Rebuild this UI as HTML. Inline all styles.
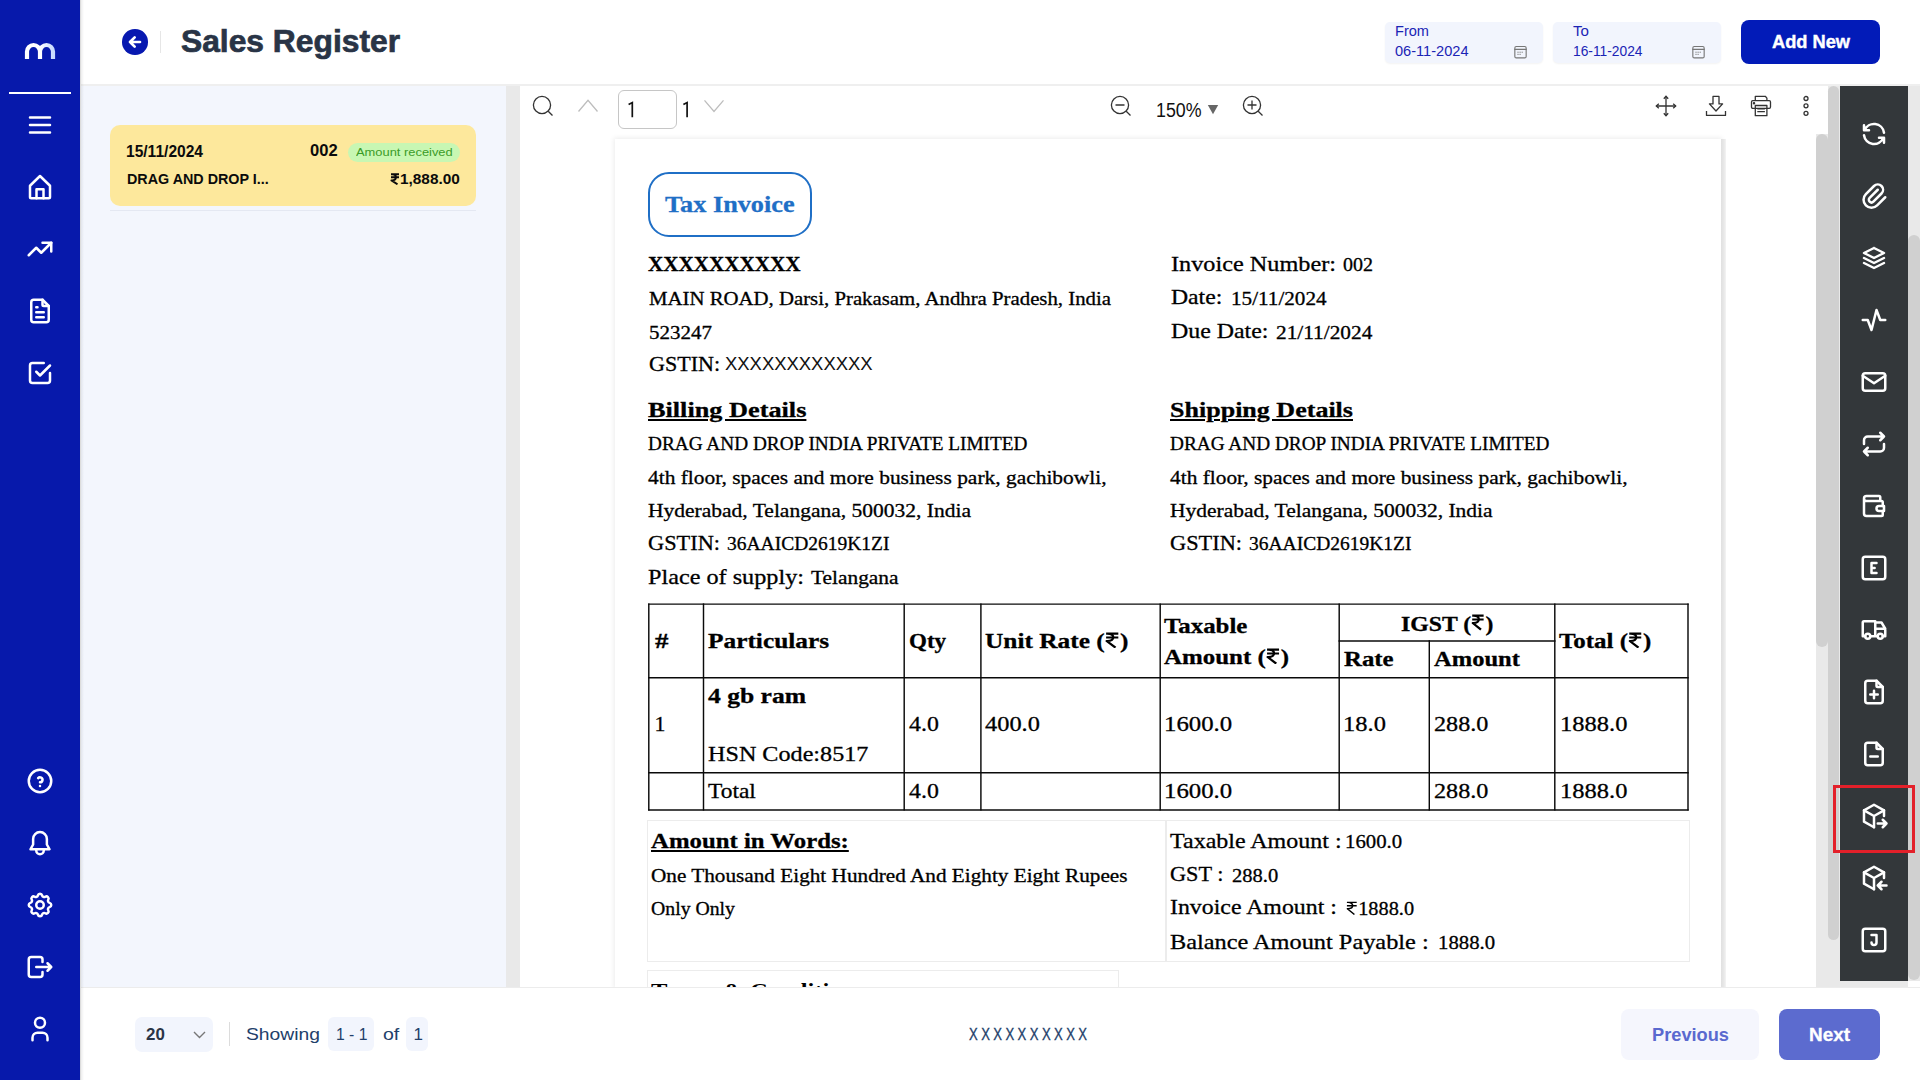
<!DOCTYPE html><html><head><meta charset="utf-8"><style>
html,body{margin:0;padding:0;width:1920px;height:1080px;overflow:hidden;background:#fff;}
body{position:relative;font-family:"Liberation Sans", sans-serif;}
.t{position:absolute;white-space:pre;line-height:normal;}
svg{display:block}
</style></head><body>
<div style="position:absolute;left:0px;top:0px;width:1920px;height:84px;background:#ffffff;"></div>
<div style="position:absolute;left:0px;top:84px;width:1920px;height:2px;background:#efefef;"></div>
<div style="position:absolute;left:80px;top:86px;width:426px;height:902px;background:#f3f6fd;"></div>
<div style="position:absolute;left:506px;top:86px;width:14px;height:902px;background:#e9e9e9;"></div>
<div style="position:absolute;left:520px;top:86px;width:1296px;height:902px;background:#ffffff;"></div>
<div style="position:absolute;left:615px;top:139px;width:1106px;height:849px;background:#ffffff;box-shadow:0 0 5px 1px rgba(0,0,0,0.08);"></div>
<div style="position:absolute;left:1721px;top:139px;width:5px;height:849px;background:linear-gradient(90deg,#e0e0e0,#e8e8e8 60%,#f4f4f4);"></div>
<div style="position:absolute;left:1816px;top:134px;width:24px;height:854px;background:#e9e9e9;"></div>
<div style="position:absolute;left:1828px;top:86px;width:12px;height:48px;background:#e9e9e9;"></div>
<div style="position:absolute;left:1816px;top:134px;width:12px;height:513px;background:#d0d0d0;border-radius:6px;"></div>
<div style="position:absolute;left:1828px;top:86px;width:11px;height:854px;background:#d0d0d0;border-radius:6px;"></div>
<div style="position:absolute;left:1840px;top:86px;width:68px;height:902px;background:#e9e9e9;"></div>
<div style="position:absolute;left:1840px;top:86px;width:68px;height:895px;background:#33373a;"></div>
<div style="position:absolute;left:1908px;top:86px;width:12px;height:895px;background:#e9e9e9;"></div>
<div style="position:absolute;left:1908px;top:235px;width:12px;height:745px;background:#d0d0d0;border-radius:6px;"></div>
<div style="position:absolute;left:80px;top:988px;width:1840px;height:92px;background:#ffffff;"></div>
<div style="position:absolute;left:80px;top:987px;width:1840px;height:1px;background:#ececec;"></div>
<div style="position:absolute;left:0px;top:0px;width:80px;height:1080px;background:#0719ab;"></div>
<div style="position:absolute;left:80px;top:0px;width:1px;height:1080px;background:#dcdcdc;"></div>
<div style="position:absolute;left:81px;top:0px;width:3px;height:1080px;background:linear-gradient(90deg,rgba(0,0,0,0.07),rgba(0,0,0,0));"></div>
<div style="position:absolute;left:9px;top:92px;width:62px;height:2px;background:#ffffff;"></div>
<div style="position:absolute;left:122.3px;top:29.2px;width:25.5px;height:25.5px;background:#0718b0;border-radius:50%;"></div>
<svg style="position:absolute;left:127px;top:34px;" width="16" height="16" viewBox="0 0 24 24" fill="none" stroke-linecap="round" stroke-linejoin="round"><path d="M4.5 12h15M4.5 12l7 7M4.5 12l7-7" stroke="#fff" stroke-width="4"/></svg>
<div style="position:absolute;left:160px;top:31px;width:1px;height:22px;background:#e6e6e6;"></div>
<div class="t" style="left:181px;top:24.45px;font-size:31px;font-weight:700;color:#293446;font-family:'Liberation Sans', sans-serif;transform:scaleX(1.0249);transform-origin:0 0;-webkit-text-stroke:0.7px #293446;">Sales Register</div>
<div style="position:absolute;left:1385px;top:22px;width:158px;height:41px;background:#f2f5fd;border-radius:5px;box-shadow:0 1px 2px rgba(0,0,0,0.05);"></div>
<div style="position:absolute;left:1553px;top:22px;width:168px;height:41px;background:#f2f5fd;border-radius:5px;box-shadow:0 1px 2px rgba(0,0,0,0.05);"></div>
<div class="t" style="left:1395px;top:23.33px;font-size:14px;font-weight:400;color:#1b24b5;font-family:'Liberation Sans', sans-serif;transform:scaleX(1.0407);transform-origin:0 0;">From</div>
<div class="t" style="left:1395px;top:43.33px;font-size:14px;font-weight:400;color:#1b24b5;font-family:'Liberation Sans', sans-serif;transform:scaleX(1.0414);transform-origin:0 0;">06-11-2024</div>
<div class="t" style="left:1573px;top:23.33px;font-size:14px;font-weight:400;color:#1b24b5;font-family:'Liberation Sans', sans-serif;transform:scaleX(1.0813);transform-origin:0 0;">To</div>
<div class="t" style="left:1573px;top:43.33px;font-size:14px;font-weight:400;color:#1b24b5;font-family:'Liberation Sans', sans-serif;transform:scaleX(0.9847);transform-origin:0 0;">16-11-2024</div>
<svg style="position:absolute;left:1512px;top:43px;" width="17" height="17" viewBox="0 0 24 24" fill="none" stroke-linecap="round" stroke-linejoin="round"><rect x="4" y="5" width="16" height="16" rx="2" stroke="#777" stroke-width="1.6"/><path d="M4 9h16" stroke="#777" stroke-width="1.6"/><path d="M8 13h1M11 13h1M14 13h1M8 16h1M11 16h1" stroke="#888" stroke-width="1.3"/></svg>
<svg style="position:absolute;left:1690px;top:43px;" width="17" height="17" viewBox="0 0 24 24" fill="none" stroke-linecap="round" stroke-linejoin="round"><rect x="4" y="5" width="16" height="16" rx="2" stroke="#777" stroke-width="1.6"/><path d="M4 9h16" stroke="#777" stroke-width="1.6"/><path d="M8 13h1M11 13h1M14 13h1M8 16h1M11 16h1" stroke="#888" stroke-width="1.3"/></svg>
<div style="position:absolute;left:1741px;top:20px;width:139px;height:44px;background:#021bb8;border-radius:8px;"></div>
<div class="t" style="left:1772px;top:31.71px;font-size:18px;font-weight:700;color:#ffffff;font-family:'Liberation Sans', sans-serif;transform:scaleX(1.0128);transform-origin:0 0;-webkit-text-stroke:0.4px #fff;">Add New</div>
<svg style="position:absolute;left:24px;top:42px" width="32" height="18" viewBox="0 0 32 18"><defs><linearGradient id="lg" x1="0" x2="1"><stop offset="0" stop-color="#fff"/><stop offset="1" stop-color="#c9dcff"/></linearGradient></defs><path d="M3 17V9.5a6.5 6.5 0 0 1 13 0V17" fill="none" stroke="#fff" stroke-width="4.2"/><path d="M16 9.5a6.5 6.5 0 0 1 13 0V17" fill="none" stroke="url(#lg)" stroke-width="4.2"/></svg>
<svg style="position:absolute;left:25.0px;top:110.0px;" width="30" height="30" viewBox="0 0 24 24" fill="none" stroke-linecap="round" stroke-linejoin="round"><path d="M4 6h16M4 12h16M4 18h16" stroke="#fff" stroke-width="2"/></svg>
<svg style="position:absolute;left:25.0px;top:172.0px;" width="30" height="30" viewBox="0 0 24 24" fill="none" stroke-linecap="round" stroke-linejoin="round"><path d="M4 20V11L12 3.2L20 11V20a1 1 0 0 1-1 1H5a1 1 0 0 1-1-1z" stroke="#fff" stroke-width="2"/><path d="M9.2 21v-7.2h5.6V21" stroke="#fff" stroke-width="2"/></svg>
<svg style="position:absolute;left:25.0px;top:234.0px;" width="30" height="30" viewBox="0 0 24 24" fill="none" stroke-linecap="round" stroke-linejoin="round"><path d="M3 17l6-6l4 4l8-8" stroke="#fff" stroke-width="2"/><path d="M14 7h7v7" stroke="#fff" stroke-width="2"/></svg>
<svg style="position:absolute;left:25.0px;top:296.0px;" width="30" height="30" viewBox="0 0 24 24" fill="none" stroke-linecap="round" stroke-linejoin="round"><path d="M14 3v4a1 1 0 0 0 1 1h4" stroke="#fff" stroke-width="2"/><path d="M17 21h-10a2 2 0 0 1-2-2v-14a2 2 0 0 1 2-2h7l5 5v11a2 2 0 0 1-2 2z" stroke="#fff" stroke-width="2"/><path d="M9 9h1M9 13h6M9 17h6" stroke="#fff" stroke-width="2"/></svg>
<svg style="position:absolute;left:25.0px;top:358.0px;" width="30" height="30" viewBox="0 0 24 24" fill="none" stroke-linecap="round" stroke-linejoin="round"><path d="M9 11l3 3l8-8" stroke="#fff" stroke-width="2"/><path d="M20 12v6a2 2 0 0 1-2 2h-12a2 2 0 0 1-2-2v-12a2 2 0 0 1 2-2h9" stroke="#fff" stroke-width="2"/></svg>
<svg style="position:absolute;left:25.0px;top:766.0px;" width="30" height="30" viewBox="0 0 24 24" fill="none" stroke-linecap="round" stroke-linejoin="round"><circle cx="12" cy="12" r="9" stroke="#fff" stroke-width="2"/><path d="M12 16v.01" stroke="#fff" stroke-width="2"/><path d="M12 13a2 2 0 0 0 .914-3.782a1.98 1.98 0 0 0-2.414.483" stroke="#fff" stroke-width="2"/></svg>
<svg style="position:absolute;left:25.0px;top:828.0px;" width="30" height="30" viewBox="0 0 24 24" fill="none" stroke-linecap="round" stroke-linejoin="round"><path d="M6.5 13.2V8.7a5.5 5.5 0 0 1 11 0V13.2L19.6 17H4.4L6.5 13.2z" stroke="#fff" stroke-width="2"/><path d="M9 17v1a3 3 0 0 0 6 0v-1" stroke="#fff" stroke-width="2"/></svg>
<svg style="position:absolute;left:25.0px;top:890.0px;" width="30" height="30" viewBox="0 0 24 24" fill="none" stroke-linecap="round" stroke-linejoin="round"><path d="M10.325 4.317c.426-1.756 2.924-1.756 3.35 0a1.724 1.724 0 0 0 2.573 1.066c1.543-.94 3.31.826 2.37 2.37a1.724 1.724 0 0 0 1.065 2.572c1.756.426 1.756 2.924 0 3.35a1.724 1.724 0 0 0-1.066 2.573c.94 1.543-.826 3.31-2.37 2.37a1.724 1.724 0 0 0-2.572 1.065c-.426 1.756-2.924 1.756-3.35 0a1.724 1.724 0 0 0-2.573-1.066c-1.543.94-3.31-.826-2.37-2.37a1.724 1.724 0 0 0-1.065-2.572c-1.756-.426-1.756-2.924 0-3.35a1.724 1.724 0 0 0 1.066-2.573c-.94-1.543.826-3.31 2.37-2.37c1 .608 2.296.07 2.572-1.065z" stroke="#fff" stroke-width="2"/><circle cx="12" cy="12" r="3" stroke="#fff" stroke-width="2"/></svg>
<svg style="position:absolute;left:25.0px;top:952.0px;" width="30" height="30" viewBox="0 0 24 24" fill="none" stroke-linecap="round" stroke-linejoin="round"><path d="M14 8v-2a2 2 0 0 0-2-2h-7a2 2 0 0 0-2 2v12a2 2 0 0 0 2 2h7a2 2 0 0 0 2-2v-2" stroke="#fff" stroke-width="2"/><path d="M9 12h12l-3-3M18 15l3-3" stroke="#fff" stroke-width="2"/></svg>
<svg style="position:absolute;left:25.0px;top:1014.0px;" width="30" height="30" viewBox="0 0 24 24" fill="none" stroke-linecap="round" stroke-linejoin="round"><circle cx="12" cy="7" r="4" stroke="#fff" stroke-width="2"/><path d="M6 21v-2a4 4 0 0 1 4-4h4a4 4 0 0 1 4 4v2" stroke="#fff" stroke-width="2"/></svg>
<div style="position:absolute;left:110px;top:125px;width:366px;height:81px;background:#fde89c;border-radius:10px;"></div>
<div style="position:absolute;left:110px;top:210px;width:366px;height:1px;background:#e4e8f2;"></div>
<div class="t" style="left:126px;top:142.72px;font-size:16px;font-weight:700;color:#0b0b0b;font-family:'Liberation Sans', sans-serif;transform:scaleX(0.9722);transform-origin:0 0;">15/11/2024</div>
<div class="t" style="left:310px;top:142.22px;font-size:16px;font-weight:700;color:#0b0b0b;font-family:'Liberation Sans', sans-serif;transform:scaleX(1.0336);transform-origin:0 0;">002</div>
<div style="position:absolute;left:348px;top:143px;width:112px;height:19px;background:#c8f7b3;border-radius:9.5px;"></div>
<div class="t" style="left:355.6px;top:145.84px;font-size:11px;font-weight:400;color:#3a9b27;font-family:'Liberation Sans', sans-serif;transform:scaleX(1.1715);transform-origin:0 0;">Amount received</div>
<div class="t" style="left:126.5px;top:170.88px;font-size:14.5px;font-weight:700;color:#0b0b0b;font-family:'Liberation Sans', sans-serif;transform:scaleX(0.9881);transform-origin:0 0;">DRAG AND DROP I...</div>
<div class="t" style="left:399.5px;top:170.18px;font-size:15px;font-weight:700;color:#0b0b0b;font-family:'Liberation Sans', sans-serif;transform:scaleX(1.0241);transform-origin:0 0;">1,888.00</div>
<svg style="position:absolute;left:390px;top:173px" width="10" height="12" viewBox="0 0 10 12"><path d="M1 1.2h8M1 4.3h8M2.2 1.2c5 0 5 6.2 0 6.2h-0.8L7.5 11.3" fill="none" stroke="#0b0b0b" stroke-width="1.9" stroke-linejoin="round"/></svg>
<svg style="position:absolute;left:530px;top:93px" width="26" height="26" viewBox="0 0 26 26" fill="none"><circle cx="12" cy="12" r="8.6" stroke="#333" stroke-width="1.3"/><path d="M18.2 18.2L22.5 22.5" stroke="#333" stroke-width="1.3"/></svg>
<svg style="position:absolute;left:576px;top:98px" width="24" height="16" viewBox="0 0 24 16" fill="none"><path d="M2.5 13.5L12 2.3L21.5 13.5" stroke="#bdbdbd" stroke-width="1.3"/></svg>
<div style="position:absolute;left:618px;top:90px;width:59px;height:39px;background:#fff;border:1.3px solid #c6c6c6;border-radius:6px;box-sizing:border-box;"></div>
<svg style="position:absolute;left:626px;top:100px" width="10" height="20" viewBox="0 0 10 20" fill="none" stroke="#111" stroke-width="1.7" stroke-linejoin="miter"><path d="M2.6 4.6L6.3 2.6V17.2"/></svg>
<svg style="position:absolute;left:681px;top:100px" width="10" height="20" viewBox="0 0 10 20" fill="none" stroke="#111" stroke-width="1.7" stroke-linejoin="miter"><path d="M2.4 4.6L6.1 2.6V17.2"/></svg>
<svg style="position:absolute;left:702px;top:98px" width="24" height="16" viewBox="0 0 24 16" fill="none"><path d="M2.5 2.3L12 13.5L21.5 2.3" stroke="#bdbdbd" stroke-width="1.3"/></svg>
<svg style="position:absolute;left:1108px;top:93px" width="26" height="26" viewBox="0 0 26 26" fill="none"><circle cx="12" cy="12" r="8.6" stroke="#333" stroke-width="1.3"/><path d="M18.2 18.2L22.5 22.5M7.5 12h9" stroke="#333" stroke-width="1.3"/></svg>
<div class="t" style="left:1156px;top:98.50px;font-size:20px;font-weight:400;color:#111;font-family:'Liberation Sans', sans-serif;transform:scaleX(0.8894);transform-origin:0 0;">150%</div>
<svg style="position:absolute;left:1207px;top:104px" width="12" height="11" viewBox="0 0 12 11"><path d="M0.8 1h10.4L6 10.3z" fill="#666"/></svg>
<svg style="position:absolute;left:1240px;top:93px" width="26" height="26" viewBox="0 0 26 26" fill="none"><circle cx="12" cy="12" r="8.6" stroke="#333" stroke-width="1.3"/><path d="M18.2 18.2L22.5 22.5M7.5 12h9M12 7.5v9" stroke="#333" stroke-width="1.3"/></svg>
<svg style="position:absolute;left:1654px;top:94px" width="24" height="24" viewBox="0 0 24 24" fill="none" stroke="#333" stroke-width="1.3"><path d="M12 2.3v19.4M2.3 12h19.4"/><path d="M9.8 4.8L12 2.3L14.2 4.8M9.8 19.2L12 21.7L14.2 19.2M4.8 9.8L2.3 12L4.8 14.2M19.2 9.8L21.7 12L19.2 14.2"/></svg>
<svg style="position:absolute;left:1704px;top:94px" width="24" height="24" viewBox="0 0 24 24" fill="none" stroke="#333" stroke-width="1.3" stroke-linejoin="round"><path d="M9 2.4h6v7.5h3.6L12 17l-6.6-7.1H9z"/><path d="M2.5 17v4.4h19V17"/></svg>
<svg style="position:absolute;left:1749px;top:94px" width="24" height="24" viewBox="0 0 24 24" fill="none" stroke="#333" stroke-width="1.3" stroke-linejoin="round"><path d="M6.3 6.5V2.3h10l1.6 1.8v2.4"/><rect x="2.5" y="6.6" width="19" height="7.8" rx="1.3"/><rect x="6.3" y="11.5" width="11.6" height="10.2"/><path d="M8.3 14.8h7.6M8.3 17.6h7.6"/><circle cx="5" cy="9.2" r="0.6" fill="#333"/></svg>
<svg style="position:absolute;left:1800px;top:94px" width="12" height="24" viewBox="0 0 12 24" fill="none" stroke="#333" stroke-width="1.3"><circle cx="6" cy="4.5" r="2"/><circle cx="6" cy="11.8" r="2"/><circle cx="6" cy="19.3" r="2"/></svg>
<svg style="position:absolute;left:1859px;top:119px;" width="30" height="30" viewBox="0 0 24 24" fill="none" stroke-linecap="round" stroke-linejoin="round"><path d="M20 11a8.1 8.1 0 0 0-15.5-2m-.5-4v4h4" stroke="#fff" stroke-width="2"/><path d="M4 13a8.1 8.1 0 0 0 15.5 2m.5 4v-4h-4" stroke="#fff" stroke-width="2"/></svg>
<svg style="position:absolute;left:1859px;top:181px;" width="30" height="30" viewBox="0 0 24 24" fill="none" stroke-linecap="round" stroke-linejoin="round"><path d="M15 7l-6.5 6.5a1.5 1.5 0 0 0 3 3l6.5-6.5a3 3 0 0 0-6-6l-6.5 6.5a4.5 4.5 0 0 0 9 9l6.5-6.5" stroke="#fff" stroke-width="2"/></svg>
<svg style="position:absolute;left:1859px;top:243px;" width="30" height="30" viewBox="0 0 24 24" fill="none" stroke-linecap="round" stroke-linejoin="round"><path d="M12 4l-8 4l8 4l8-4l-8-4" stroke="#fff" stroke-width="2"/><path d="M4 12l8 4l8-4" stroke="#fff" stroke-width="2"/><path d="M4 16l8 4l8-4" stroke="#fff" stroke-width="2"/></svg>
<svg style="position:absolute;left:1859px;top:305px;" width="30" height="30" viewBox="0 0 24 24" fill="none" stroke-linecap="round" stroke-linejoin="round"><path d="M3 12h4l3 8l4-16l3 8h4" stroke="#fff" stroke-width="2"/></svg>
<svg style="position:absolute;left:1859px;top:367px;" width="30" height="30" viewBox="0 0 24 24" fill="none" stroke-linecap="round" stroke-linejoin="round"><path d="M3 7a2 2 0 0 1 2-2h14a2 2 0 0 1 2 2v10a2 2 0 0 1-2 2h-14a2 2 0 0 1-2-2v-10z" stroke="#fff" stroke-width="2"/><path d="M3 7l9 6l9-6" stroke="#fff" stroke-width="2"/></svg>
<svg style="position:absolute;left:1859px;top:429px;" width="30" height="30" viewBox="0 0 24 24" fill="none" stroke-linecap="round" stroke-linejoin="round"><path d="M4 12v-3a3 3 0 0 1 3-3h13m-3-3l3 3l-3 3" stroke="#fff" stroke-width="2"/><path d="M20 12v3a3 3 0 0 1-3 3h-13m3 3l-3-3l3-3" stroke="#fff" stroke-width="2"/></svg>
<svg style="position:absolute;left:1859px;top:491px;" width="30" height="30" viewBox="0 0 24 24" fill="none" stroke-linecap="round" stroke-linejoin="round"><path d="M17 8v-3a1 1 0 0 0-1-1h-10a2 2 0 0 0 0 4h12a1 1 0 0 1 1 1v3m0 4v3a1 1 0 0 1-1 1h-12a2 2 0 0 1-2-2v-12" stroke="#fff" stroke-width="2"/><path d="M20 12v4h-4a2 2 0 0 1 0-4h4" stroke="#fff" stroke-width="2"/></svg>
<svg style="position:absolute;left:1859px;top:553px;" width="30" height="30" viewBox="0 0 24 24" fill="none" stroke-linecap="round" stroke-linejoin="round"><rect x="3" y="3" width="18" height="18" rx="2" stroke="#fff" stroke-width="2"/><path d="M14 8h-4v8h4M10 12h2.5" stroke="#fff" stroke-width="2"/></svg>
<svg style="position:absolute;left:1859px;top:615px;" width="30" height="30" viewBox="0 0 24 24" fill="none" stroke-linecap="round" stroke-linejoin="round"><circle cx="7" cy="17" r="2" stroke="#fff" stroke-width="2"/><circle cx="17" cy="17" r="2" stroke="#fff" stroke-width="2"/><path d="M5 17h-2v-11a1 1 0 0 1 1-1h9v12m-4 0h6m4 0h2v-6h-8m0-5h5l3 5" stroke="#fff" stroke-width="2"/></svg>
<svg style="position:absolute;left:1859px;top:677px;" width="30" height="30" viewBox="0 0 24 24" fill="none" stroke-linecap="round" stroke-linejoin="round"><path d="M14 3v4a1 1 0 0 0 1 1h4" stroke="#fff" stroke-width="2"/><path d="M17 21h-10a2 2 0 0 1-2-2v-14a2 2 0 0 1 2-2h7l5 5v11a2 2 0 0 1-2 2z" stroke="#fff" stroke-width="2"/><path d="M12 11v6M9 14h6" stroke="#fff" stroke-width="2"/></svg>
<svg style="position:absolute;left:1859px;top:739px;" width="30" height="30" viewBox="0 0 24 24" fill="none" stroke-linecap="round" stroke-linejoin="round"><path d="M14 3v4a1 1 0 0 0 1 1h4" stroke="#fff" stroke-width="2"/><path d="M17 21h-10a2 2 0 0 1-2-2v-14a2 2 0 0 1 2-2h7l5 5v11a2 2 0 0 1-2 2z" stroke="#fff" stroke-width="2"/><path d="M9 14h6" stroke="#fff" stroke-width="2"/></svg>
<svg style="position:absolute;left:1859px;top:801px;" width="30" height="30" viewBox="0 0 24 24" fill="none" stroke-linecap="round" stroke-linejoin="round"><path d="M12 21l-8-4.5v-9l8-4.5l8 4.5v4.5" stroke="#fff" stroke-width="2"/><path d="M12 12l8-4.5M12 12v9M12 12l-8-4.5" stroke="#fff" stroke-width="2"/><path d="M15 18h7M19 15l3 3l-3 3" stroke="#fff" stroke-width="2"/></svg>
<svg style="position:absolute;left:1859px;top:863px;" width="30" height="30" viewBox="0 0 24 24" fill="none" stroke-linecap="round" stroke-linejoin="round"><path d="M12 21l-8-4.5v-9l8-4.5l8 4.5v4.5" stroke="#fff" stroke-width="2"/><path d="M12 12l8-4.5M12 12v9M12 12l-8-4.5" stroke="#fff" stroke-width="2"/><path d="M22 18h-7M18 15l-3 3l3 3" stroke="#fff" stroke-width="2"/></svg>
<svg style="position:absolute;left:1859px;top:925px;" width="30" height="30" viewBox="0 0 24 24" fill="none" stroke-linecap="round" stroke-linejoin="round"><rect x="3" y="3" width="18" height="18" rx="2" stroke="#fff" stroke-width="2"/><path d="M10 8h4v6a2 2 0 1 1-4 0" stroke="#fff" stroke-width="2"/></svg>
<div style="position:absolute;left:1833px;top:785px;width:82px;height:68px;background:transparent;border:3px solid #e3202a;box-sizing:border-box;"></div>
<div style="position:absolute;left:135px;top:1017px;width:78px;height:35px;background:#f2f5fd;border-radius:7px;"></div>
<div class="t" style="left:145.5px;top:1024.62px;font-size:17px;font-weight:700;color:#2a3446;font-family:'Liberation Sans', sans-serif;transform:scaleX(0.9936);transform-origin:0 0;">20</div>
<svg style="position:absolute;left:192px;top:1029px" width="15" height="12" viewBox="0 0 15 12" fill="none"><path d="M2 3l5.5 5.5L13 3" stroke="#777" stroke-width="1.4"/></svg>
<div style="position:absolute;left:229px;top:1022px;width:1px;height:24px;background:#dcdcdc;"></div>
<div class="t" style="left:245.5px;top:1024.62px;font-size:17px;font-weight:400;color:#22406a;font-family:'Liberation Sans', sans-serif;transform:scaleX(1.1346);transform-origin:0 0;">Showing</div>
<div style="position:absolute;left:328px;top:1017px;width:46px;height:34px;background:#f2f5fd;border-radius:6px;"></div>
<div class="t" style="left:335.5px;top:1024.62px;font-size:17px;font-weight:400;color:#22406a;font-family:'Liberation Sans', sans-serif;transform:scaleX(0.9256);transform-origin:0 0;">1 - 1</div>
<div class="t" style="left:382.5px;top:1024.62px;font-size:17px;font-weight:400;color:#22406a;font-family:'Liberation Sans', sans-serif;transform:scaleX(1.1489);transform-origin:0 0;">of</div>
<div style="position:absolute;left:406px;top:1017px;width:21.5px;height:34px;background:#f2f5fd;border-radius:6px;"></div>
<div class="t" style="left:413.5px;top:1024.62px;font-size:17px;font-weight:400;color:#22406a;font-family:'Liberation Sans', sans-serif;">1</div>
<div class="t" style="left:968.5px;top:1023.85px;font-size:17.4px;font-weight:400;color:#22406a;font-family:'Liberation Sans', sans-serif;letter-spacing:4.6px;transform:scaleX(0.75);transform-origin:0 0;-webkit-text-stroke:0.35px #22406a;">XXXXXXXXXX</div>
<div style="position:absolute;left:1621px;top:1009px;width:138px;height:51px;background:#f5f6fd;border-radius:8px;"></div>
<div class="t" style="left:1651.7px;top:1024.01px;font-size:19px;font-weight:700;color:#5a69cf;font-family:'Liberation Sans', sans-serif;transform:scaleX(0.9593);transform-origin:0 0;">Previous</div>
<div style="position:absolute;left:1779px;top:1009px;width:101px;height:51px;background:#5c6bcf;border-radius:8px;"></div>
<div class="t" style="left:1809.2px;top:1024.01px;font-size:19px;font-weight:700;color:#ffffff;font-family:'Liberation Sans', sans-serif;transform:scaleX(0.9954);transform-origin:0 0;-webkit-text-stroke:0.3px #fff;">Next</div>
<div style="position:absolute;left:648px;top:172px;width:164px;height:65px;background:transparent;border:2.6px solid #1f6fc6;border-radius:21px;box-sizing:border-box;"></div>
<div class="t" style="left:665px;top:191.36px;font-size:23.5px;font-weight:700;color:#1f6fc6;font-family:'Liberation Serif', serif;transform:scaleX(1.1172);transform-origin:0 0;-webkit-text-stroke:0.3px #1f6fc6;">Tax Invoice</div>
<div class="t" style="left:648px;top:251.40px;font-size:22.0px;font-weight:700;color:#000;font-family:'Liberation Serif', serif;transform:scaleX(0.9598);transform-origin:0 0;-webkit-text-stroke:0.3px #000;">XXXXXXXXXX</div>
<div class="t" style="left:648.5px;top:288.16px;font-size:18.9px;font-weight:400;color:#000;font-family:'Liberation Serif', serif;transform:scaleX(1.1007);transform-origin:0 0;-webkit-text-stroke:0.3px #000;">MAIN ROAD, Darsi, Prakasam, Andhra Pradesh, India</div>
<div class="t" style="left:648.5px;top:322.06px;font-size:18.9px;font-weight:400;color:#000;font-family:'Liberation Serif', serif;transform:scaleX(1.1117);transform-origin:0 0;-webkit-text-stroke:0.3px #000;">523247</div>
<div class="t" style="left:648.5px;top:351.98px;font-size:21.8px;font-weight:400;color:#000;font-family:'Liberation Serif', serif;transform:scaleX(1.0137);transform-origin:0 0;-webkit-text-stroke:0.3px #000;">GSTIN:</div>
<div class="t" style="left:724.6px;top:353.11px;font-size:19px;font-weight:400;color:#111;font-family:'Liberation Sans', sans-serif;transform:scaleX(0.9706);transform-origin:0 0;">XXXXXXXXXXXX</div>
<div class="t" style="left:1170.5px;top:251.58px;font-size:21.8px;font-weight:400;color:#000;font-family:'Liberation Serif', serif;transform:scaleX(1.1126);transform-origin:0 0;-webkit-text-stroke:0.3px #000;">Invoice Number:</div>
<div class="t" style="left:1343px;top:254.16px;font-size:18.9px;font-weight:400;color:#000;font-family:'Liberation Serif', serif;transform:scaleX(1.0584);transform-origin:0 0;-webkit-text-stroke:0.3px #000;">002</div>
<div class="t" style="left:1170.5px;top:285.33px;font-size:21.8px;font-weight:400;color:#000;font-family:'Liberation Serif', serif;transform:scaleX(1.0868);transform-origin:0 0;-webkit-text-stroke:0.3px #000;">Date:</div>
<div class="t" style="left:1230.6px;top:287.91px;font-size:18.9px;font-weight:400;color:#000;font-family:'Liberation Serif', serif;transform:scaleX(1.1200);transform-origin:0 0;-webkit-text-stroke:0.3px #000;">15/11/2024</div>
<div class="t" style="left:1170.5px;top:319.33px;font-size:21.8px;font-weight:400;color:#000;font-family:'Liberation Serif', serif;transform:scaleX(1.0959);transform-origin:0 0;-webkit-text-stroke:0.3px #000;">Due Date:</div>
<div class="t" style="left:1275.6px;top:321.91px;font-size:18.9px;font-weight:400;color:#000;font-family:'Liberation Serif', serif;transform:scaleX(1.1282);transform-origin:0 0;-webkit-text-stroke:0.3px #000;">21/11/2024</div>
<div class="t" style="left:648.3px;top:396.60px;font-size:22.0px;font-weight:700;color:#000;font-family:'Liberation Serif', serif;transform:scaleX(1.1943);transform-origin:0 0;-webkit-text-stroke:0.3px #000;text-decoration:underline;text-decoration-thickness:1.5px;text-underline-offset:2px;">Billing Details</div>
<div class="t" style="left:648.3px;top:433.06px;font-size:18.9px;font-weight:400;color:#000;font-family:'Liberation Serif', serif;transform:scaleX(1.0200);transform-origin:0 0;-webkit-text-stroke:0.3px #000;">DRAG AND DROP INDIA PRIVATE LIMITED</div>
<div class="t" style="left:648.3px;top:466.96px;font-size:18.9px;font-weight:400;color:#000;font-family:'Liberation Serif', serif;transform:scaleX(1.1342);transform-origin:0 0;-webkit-text-stroke:0.3px #000;">4th floor, spaces and more business park, gachibowli,</div>
<div class="t" style="left:648.3px;top:500.16px;font-size:18.9px;font-weight:400;color:#000;font-family:'Liberation Serif', serif;transform:scaleX(1.1385);transform-origin:0 0;-webkit-text-stroke:0.3px #000;">Hyderabad, Telangana, 500032, India</div>
<div class="t" style="left:648.3px;top:530.78px;font-size:21.8px;font-weight:400;color:#000;font-family:'Liberation Serif', serif;transform:scaleX(1.0251);transform-origin:0 0;-webkit-text-stroke:0.3px #000;">GSTIN:</div>
<div class="t" style="left:726.8px;top:533.36px;font-size:18.9px;font-weight:400;color:#000;font-family:'Liberation Serif', serif;transform:scaleX(1.0323);transform-origin:0 0;-webkit-text-stroke:0.3px #000;">36AAICD2619K1ZI</div>
<div class="t" style="left:1170px;top:396.60px;font-size:22.0px;font-weight:700;color:#000;font-family:'Liberation Serif', serif;transform:scaleX(1.1831);transform-origin:0 0;-webkit-text-stroke:0.3px #000;text-decoration:underline;text-decoration-thickness:1.5px;text-underline-offset:2px;">Shipping Details</div>
<div class="t" style="left:1170px;top:433.06px;font-size:18.9px;font-weight:400;color:#000;font-family:'Liberation Serif', serif;transform:scaleX(1.0200);transform-origin:0 0;-webkit-text-stroke:0.3px #000;">DRAG AND DROP INDIA PRIVATE LIMITED</div>
<div class="t" style="left:1170px;top:466.96px;font-size:18.9px;font-weight:400;color:#000;font-family:'Liberation Serif', serif;transform:scaleX(1.1317);transform-origin:0 0;-webkit-text-stroke:0.3px #000;">4th floor, spaces and more business park, gachibowli,</div>
<div class="t" style="left:1170px;top:500.16px;font-size:18.9px;font-weight:400;color:#000;font-family:'Liberation Serif', serif;transform:scaleX(1.1368);transform-origin:0 0;-webkit-text-stroke:0.3px #000;">Hyderabad, Telangana, 500032, India</div>
<div class="t" style="left:1170px;top:530.78px;font-size:21.8px;font-weight:400;color:#000;font-family:'Liberation Serif', serif;transform:scaleX(1.0251);transform-origin:0 0;-webkit-text-stroke:0.3px #000;">GSTIN:</div>
<div class="t" style="left:1248.8px;top:533.36px;font-size:18.9px;font-weight:400;color:#000;font-family:'Liberation Serif', serif;transform:scaleX(1.0323);transform-origin:0 0;-webkit-text-stroke:0.3px #000;">36AAICD2619K1ZI</div>
<div class="t" style="left:648.3px;top:564.58px;font-size:21.8px;font-weight:400;color:#000;font-family:'Liberation Serif', serif;transform:scaleX(1.1107);transform-origin:0 0;-webkit-text-stroke:0.3px #000;">Place of supply:</div>
<div class="t" style="left:811px;top:567.16px;font-size:18.9px;font-weight:400;color:#000;font-family:'Liberation Serif', serif;transform:scaleX(1.1313);transform-origin:0 0;-webkit-text-stroke:0.3px #000;">Telangana</div>
<svg style="position:absolute;left:0;top:0" width="1920" height="1080" fill="none" stroke="#0a0a0a" stroke-width="1.45"><path d="M648.0999999999999 604.1H1688.7"/><path d="M648.0999999999999 677.7H1688.7"/><path d="M648.0999999999999 772.8H1688.7"/><path d="M648.0999999999999 809.9H1688.7"/><path d="M1338.5 640.9H1555.5"/><path d="M648.8 603.4V810.6"/><path d="M703.5 603.4V810.6"/><path d="M904.2 603.4V810.6"/><path d="M980.9 603.4V810.6"/><path d="M1160.2 603.4V810.6"/><path d="M1339.2 603.4V810.6"/><path d="M1554.8 603.4V810.6"/><path d="M1688 603.4V810.6"/><path d="M1429.3 640.1999999999999V810.6"/></svg>
<div class="t" style="left:654.5px;top:628.30px;font-size:22.0px;font-weight:700;color:#000;font-family:'Liberation Serif', serif;transform:scaleX(1.2273);transform-origin:0 0;-webkit-text-stroke:0.3px #000;">#</div>
<div class="t" style="left:708.1px;top:628.30px;font-size:22.0px;font-weight:700;color:#000;font-family:'Liberation Serif', serif;transform:scaleX(1.1523);transform-origin:0 0;-webkit-text-stroke:0.3px #000;">Particulars</div>
<div class="t" style="left:908.5px;top:628.30px;font-size:22.0px;font-weight:700;color:#000;font-family:'Liberation Serif', serif;transform:scaleX(1.0465);transform-origin:0 0;-webkit-text-stroke:0.3px #000;">Qty</div>
<div class="t" style="left:985px;top:628.30px;font-size:22.0px;font-weight:700;color:#000;font-family:'Liberation Serif', serif;transform:scaleX(1.1536);transform-origin:0 0;-webkit-text-stroke:0.3px #000;">Unit Rate (<svg style="display:inline-block;width:0.56em;height:0.74em;vertical-align:baseline;margin:0 0.02em" viewBox="0 0 10 13" fill="none" stroke="currentColor" stroke-width="1.7" stroke-linejoin="round"><path d="M0.8 1.2h8.6M0.8 4.4h8.6M1.8 1.2c5.4 0 5.4 6 0 6h-0.6l6.2 5.4"/></svg>)</div>
<div class="t" style="left:1164px;top:613.20px;font-size:22.0px;font-weight:700;color:#000;font-family:'Liberation Serif', serif;transform:scaleX(1.1304);transform-origin:0 0;-webkit-text-stroke:0.3px #000;">Taxable</div>
<div class="t" style="left:1164px;top:644.10px;font-size:22.0px;font-weight:700;color:#000;font-family:'Liberation Serif', serif;transform:scaleX(1.1327);transform-origin:0 0;-webkit-text-stroke:0.3px #000;">Amount (<svg style="display:inline-block;width:0.56em;height:0.74em;vertical-align:baseline;margin:0 0.02em" viewBox="0 0 10 13" fill="none" stroke="currentColor" stroke-width="1.7" stroke-linejoin="round"><path d="M0.8 1.2h8.6M0.8 4.4h8.6M1.8 1.2c5.4 0 5.4 6 0 6h-0.6l6.2 5.4"/></svg>)</div>
<div class="t" style="left:1400.6px;top:610.60px;font-size:22.0px;font-weight:700;color:#000;font-family:'Liberation Serif', serif;transform:scaleX(1.0791);transform-origin:0 0;-webkit-text-stroke:0.3px #000;">IGST (<svg style="display:inline-block;width:0.56em;height:0.74em;vertical-align:baseline;margin:0 0.02em" viewBox="0 0 10 13" fill="none" stroke="currentColor" stroke-width="1.7" stroke-linejoin="round"><path d="M0.8 1.2h8.6M0.8 4.4h8.6M1.8 1.2c5.4 0 5.4 6 0 6h-0.6l6.2 5.4"/></svg>)</div>
<div class="t" style="left:1343.9px;top:645.60px;font-size:22.0px;font-weight:700;color:#000;font-family:'Liberation Serif', serif;transform:scaleX(1.1277);transform-origin:0 0;-webkit-text-stroke:0.3px #000;">Rate</div>
<div class="t" style="left:1433.6px;top:645.60px;font-size:22.0px;font-weight:700;color:#000;font-family:'Liberation Serif', serif;transform:scaleX(1.1154);transform-origin:0 0;-webkit-text-stroke:0.3px #000;">Amount</div>
<div class="t" style="left:1559px;top:628.40px;font-size:22.0px;font-weight:700;color:#000;font-family:'Liberation Serif', serif;transform:scaleX(1.1334);transform-origin:0 0;-webkit-text-stroke:0.3px #000;">Total (<svg style="display:inline-block;width:0.56em;height:0.74em;vertical-align:baseline;margin:0 0.02em" viewBox="0 0 10 13" fill="none" stroke="currentColor" stroke-width="1.7" stroke-linejoin="round"><path d="M0.8 1.2h8.6M0.8 4.4h8.6M1.8 1.2c5.4 0 5.4 6 0 6h-0.6l6.2 5.4"/></svg>)</div>
<div class="t" style="left:708.1px;top:683.30px;font-size:22.0px;font-weight:700;color:#000;font-family:'Liberation Serif', serif;transform:scaleX(1.1633);transform-origin:0 0;-webkit-text-stroke:0.3px #000;">4 gb ram</div>
<div class="t" style="left:708.1px;top:742.28px;font-size:21.8px;font-weight:400;color:#000;font-family:'Liberation Serif', serif;transform:scaleX(1.1084);transform-origin:0 0;-webkit-text-stroke:0.3px #000;">HSN Code:8517</div>
<div class="t" style="left:654.5px;top:712.48px;font-size:21.8px;font-weight:400;color:#000;font-family:'Liberation Serif', serif;-webkit-text-stroke:0.3px #000;">1</div>
<div class="t" style="left:908.5px;top:712.48px;font-size:21.8px;font-weight:400;color:#000;font-family:'Liberation Serif', serif;transform:scaleX(1.0936);transform-origin:0 0;-webkit-text-stroke:0.3px #000;">4.0</div>
<div class="t" style="left:985px;top:712.48px;font-size:21.8px;font-weight:400;color:#000;font-family:'Liberation Serif', serif;transform:scaleX(1.1193);transform-origin:0 0;-webkit-text-stroke:0.3px #000;">400.0</div>
<div class="t" style="left:1164px;top:712.48px;font-size:21.8px;font-weight:400;color:#000;font-family:'Liberation Serif', serif;transform:scaleX(1.1376);transform-origin:0 0;-webkit-text-stroke:0.3px #000;">1600.0</div>
<div class="t" style="left:1343.4px;top:712.48px;font-size:21.8px;font-weight:400;color:#000;font-family:'Liberation Serif', serif;transform:scaleX(1.1243);transform-origin:0 0;-webkit-text-stroke:0.3px #000;">18.0</div>
<div class="t" style="left:1433.6px;top:712.48px;font-size:21.8px;font-weight:400;color:#000;font-family:'Liberation Serif', serif;transform:scaleX(1.1091);transform-origin:0 0;-webkit-text-stroke:0.3px #000;">288.0</div>
<div class="t" style="left:1559.6px;top:712.48px;font-size:21.8px;font-weight:400;color:#000;font-family:'Liberation Serif', serif;transform:scaleX(1.1242);transform-origin:0 0;-webkit-text-stroke:0.3px #000;">1888.0</div>
<div class="t" style="left:708.1px;top:778.88px;font-size:21.8px;font-weight:400;color:#000;font-family:'Liberation Serif', serif;transform:scaleX(1.0768);transform-origin:0 0;-webkit-text-stroke:0.3px #000;">Total</div>
<div class="t" style="left:908.5px;top:778.88px;font-size:21.8px;font-weight:400;color:#000;font-family:'Liberation Serif', serif;transform:scaleX(1.0936);transform-origin:0 0;-webkit-text-stroke:0.3px #000;">4.0</div>
<div class="t" style="left:1164px;top:778.88px;font-size:21.8px;font-weight:400;color:#000;font-family:'Liberation Serif', serif;transform:scaleX(1.1376);transform-origin:0 0;-webkit-text-stroke:0.3px #000;">1600.0</div>
<div class="t" style="left:1433.6px;top:778.88px;font-size:21.8px;font-weight:400;color:#000;font-family:'Liberation Serif', serif;transform:scaleX(1.1091);transform-origin:0 0;-webkit-text-stroke:0.3px #000;">288.0</div>
<div class="t" style="left:1559.6px;top:778.88px;font-size:21.8px;font-weight:400;color:#000;font-family:'Liberation Serif', serif;transform:scaleX(1.1242);transform-origin:0 0;-webkit-text-stroke:0.3px #000;">1888.0</div>
<div style="position:absolute;left:646.8px;top:820px;width:519px;height:142px;background:transparent;border:1px solid #ececec;box-sizing:border-box;"></div>
<div style="position:absolute;left:1165.5px;top:820px;width:524px;height:142px;background:transparent;border:1px solid #ececec;box-sizing:border-box;"></div>
<div class="t" style="left:651.2px;top:828.30px;font-size:22.0px;font-weight:700;color:#000;font-family:'Liberation Serif', serif;transform:scaleX(1.1262);transform-origin:0 0;-webkit-text-stroke:0.3px #000;text-decoration:underline;text-decoration-thickness:1.5px;text-underline-offset:2px;">Amount in Words:</div>
<div class="t" style="left:651.2px;top:864.66px;font-size:18.9px;font-weight:400;color:#000;font-family:'Liberation Serif', serif;transform:scaleX(1.1235);transform-origin:0 0;-webkit-text-stroke:0.3px #000;">One Thousand Eight Hundred And Eighty Eight Rupees</div>
<div class="t" style="left:651.2px;top:897.56px;font-size:18.9px;font-weight:400;color:#000;font-family:'Liberation Serif', serif;transform:scaleX(1.0461);transform-origin:0 0;-webkit-text-stroke:0.3px #000;">Only Only</div>
<div class="t" style="left:1170.3px;top:828.68px;font-size:21.8px;font-weight:400;color:#000;font-family:'Liberation Serif', serif;transform:scaleX(1.1009);transform-origin:0 0;-webkit-text-stroke:0.3px #000;">Taxable Amount :</div>
<div class="t" style="left:1344.7px;top:831.26px;font-size:18.9px;font-weight:400;color:#000;font-family:'Liberation Serif', serif;transform:scaleX(1.1010);transform-origin:0 0;-webkit-text-stroke:0.3px #000;">1600.0</div>
<div class="t" style="left:1170.3px;top:862.48px;font-size:21.8px;font-weight:400;color:#000;font-family:'Liberation Serif', serif;transform:scaleX(1.0211);transform-origin:0 0;-webkit-text-stroke:0.3px #000;">GST :</div>
<div class="t" style="left:1232.2px;top:865.06px;font-size:18.9px;font-weight:400;color:#000;font-family:'Liberation Serif', serif;transform:scaleX(1.0890);transform-origin:0 0;-webkit-text-stroke:0.3px #000;">288.0</div>
<div class="t" style="left:1170.3px;top:895.28px;font-size:21.8px;font-weight:400;color:#000;font-family:'Liberation Serif', serif;transform:scaleX(1.0940);transform-origin:0 0;-webkit-text-stroke:0.3px #000;">Invoice Amount :</div>
<div class="t" style="left:1346px;top:897.86px;font-size:18.9px;font-weight:400;color:#000;font-family:'Liberation Serif', serif;transform:scaleX(1.0761);transform-origin:0 0;-webkit-text-stroke:0.3px #000;"><svg style="display:inline-block;width:0.56em;height:0.74em;vertical-align:baseline;margin:0 0.02em" viewBox="0 0 10 13" fill="none" stroke="currentColor" stroke-width="1.3" stroke-linejoin="round"><path d="M0.8 1.2h8.6M0.8 4.4h8.6M1.8 1.2c5.4 0 5.4 6 0 6h-0.6l6.2 5.4"/></svg>1888.0</div>
<div class="t" style="left:1170.3px;top:929.58px;font-size:21.8px;font-weight:400;color:#000;font-family:'Liberation Serif', serif;transform:scaleX(1.1158);transform-origin:0 0;-webkit-text-stroke:0.3px #000;">Balance Amount Payable :</div>
<div class="t" style="left:1437.5px;top:932.16px;font-size:18.9px;font-weight:400;color:#000;font-family:'Liberation Serif', serif;transform:scaleX(1.1010);transform-origin:0 0;-webkit-text-stroke:0.3px #000;">1888.0</div>
<div style="position:absolute;left:646.8px;top:969.8px;width:472px;height:17.2px;overflow:hidden;border:1px solid #ececec;border-bottom:none;box-sizing:border-box;"><div style="position:absolute;left:3.5px;top:7.5px;font-family:'Liberation Serif',serif;font-weight:700;font-size:22px;white-space:pre;transform:scaleX(1.12);transform-origin:0 0;line-height:normal;color:#000">Terms &amp; Conditions</div></div>
</body></html>
